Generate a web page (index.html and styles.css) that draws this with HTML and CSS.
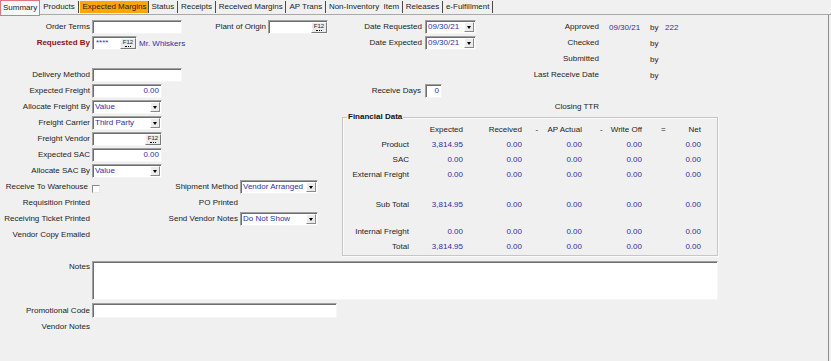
FILE: index.html
```html
<!DOCTYPE html>
<html>
<head>
<meta charset="utf-8">
<link rel="stylesheet" href="styles.css">
</head>
<body>
<div class="tabs">
  <span class="tab tab-active">Summary</span>
  <span class="tab">Products</span>
  <span class="tab tab-orange">Expected Margins</span>
  <span class="tab">Status</span>
  <span class="tab">Receipts</span>
  <span class="tab">Received Margins</span>
  <span class="tab">AP Trans</span>
  <span class="tab">Non-Inventory  Item</span>
  <span class="tab">Releases</span>
  <span class="tab">e-Fulfillment</span>
</div>
<div class="panel">
  <div class="top">
    <div class="left">
      <div class="row">
        <span class="lbl">Order Terms</span>
        <span class="input w90"></span>
        <span class="lbl2 w84">Plant of Origin</span>
        <span class="input lookup w60"><span class="f12">F12</span></span>
      </div>
      <div class="row">
        <span class="lbl req">Requested By</span>
        <span class="input lookup w45"><span class="val">****</span><span class="f12">F12</span></span>
        <span class="val whisk">Mr. Whiskers</span>
      </div>
      <div class="row"></div>
      <div class="row">
        <span class="lbl">Delivery Method</span>
        <span class="input w90"></span>
      </div>
      <div class="row">
        <span class="lbl">Expected Freight</span>
        <span class="input num w70"><span class="val">0.00</span></span>
      </div>
      <div class="row">
        <span class="lbl">Allocate Freight By</span>
        <span class="input combo w70"><span class="val">Value</span><span class="dd"></span></span>
      </div>
      <div class="row">
        <span class="lbl">Freight Carrier</span>
        <span class="input combo w70"><span class="val">Third Party</span><span class="dd"></span></span>
      </div>
      <div class="row">
        <span class="lbl">Freight Vendor</span>
        <span class="input lookup w70"><span class="f12">F12</span></span>
      </div>
      <div class="row">
        <span class="lbl">Expected SAC</span>
        <span class="input num w70"><span class="val">0.00</span></span>
      </div>
      <div class="row">
        <span class="lbl">Allocate SAC By</span>
        <span class="input combo w70"><span class="val">Value</span><span class="dd"></span></span>
      </div>
      <div class="row">
        <span class="lbl lbl-cb">Receive To Warehouse</span>
        <span class="check"></span>
        <span class="lbl2 w138">Shipment Method</span>
        <span class="input combo w78"><span class="val">Vendor Arranged</span><span class="dd"></span></span>
      </div>
      <div class="row">
        <span class="lbl">Requisition Printed</span>
        <span class="lbl2 w146">PO Printed</span>
      </div>
      <div class="row">
        <span class="lbl">Receiving Ticket Printed</span>
        <span class="lbl2 w146">Send Vendor Notes</span>
        <span class="input combo w78"><span class="val">Do Not Show</span><span class="dd"></span></span>
      </div>
      <div class="row">
        <span class="lbl">Vendor Copy Emailed</span>
      </div>
    </div>
    <div class="right">
      <div class="rtop">
        <div class="dates">
          <div class="row">
            <span class="dl">Date Requested</span>
            <span class="input combo w51"><span class="val">09/30/21</span><span class="dd"></span></span>
          </div>
          <div class="row">
            <span class="dl">Date Expected</span>
            <span class="input combo w51"><span class="val">09/30/21</span><span class="dd"></span></span>
          </div>
          <div class="row"></div>
          <div class="row"></div>
          <div class="row">
            <span class="dl dl-days">Receive Days</span>
            <span class="input num w17"><span class="val">0</span></span>
          </div>
        </div>
        <div class="appr">
          <div class="row"><span class="al">Approved</span><span class="av val">09/30/21</span><span class="by">by</span><span class="val">222</span></div>
          <div class="row"><span class="al">Checked</span><span class="av"></span><span class="by">by</span></div>
          <div class="row"><span class="al">Submitted</span><span class="av"></span><span class="by">by</span></div>
          <div class="row"><span class="al">Last Receive Date</span><span class="av"></span><span class="by">by</span></div>
          <div class="row"></div>
          <div class="row"><span class="al">Closing TTR</span></div>
        </div>
      </div>
      <div class="group">
        <div class="gtitle">Financial Data</div>
        <div class="frow">
          <span></span>
          <span>Expected</span>
          <span>Received</span>
          <span class="hc hc1"><span>-</span><span>AP Actual</span></span>
          <span class="hc hc2"><span>-</span><span>Write Off</span></span>
          <span class="hc hc3"><span>=</span><span>Net</span></span>
        </div>
        <div class="frow">
          <span>Product</span><span class="val">3,814.95</span><span class="val">0.00</span><span class="val">0.00</span><span class="val">0.00</span><span class="val">0.00</span>
        </div>
        <div class="frow">
          <span>SAC</span><span class="val">0.00</span><span class="val">0.00</span><span class="val">0.00</span><span class="val">0.00</span><span class="val">0.00</span>
        </div>
        <div class="frow">
          <span>External Freight</span><span class="val">0.00</span><span class="val">0.00</span><span class="val">0.00</span><span class="val">0.00</span><span class="val">0.00</span>
        </div>
        <div class="fsp1"></div>
        <div class="frow">
          <span>Sub Total</span><span class="val">3,814.95</span><span class="val">0.00</span><span class="val">0.00</span><span class="val">0.00</span><span class="val">0.00</span>
        </div>
        <div class="fsp2"></div>
        <div class="frow">
          <span>Internal Freight</span><span class="val">0.00</span><span class="val">0.00</span><span class="val">0.00</span><span class="val">0.00</span><span class="val">0.00</span>
        </div>
        <div class="frow">
          <span>Total</span><span class="val">3,814.95</span><span class="val">0.00</span><span class="val">0.00</span><span class="val">0.00</span><span class="val">0.00</span>
        </div>
      </div>
    </div>
  </div>
  <div class="notes">
    <span class="lbl lbl-top">Notes</span>
    <span class="input ta"></span>
  </div>
  <div class="row promo">
    <span class="lbl">Promotional Code</span>
    <span class="input w245"></span>
  </div>
  <div class="row vnotes">
    <span class="lbl">Vendor Notes</span>
  </div>
</div>
</body>
</html>
```
FILE: styles.css
```css
* { box-sizing: border-box; }
html, body { margin: 0; padding: 0; }
body {
  width: 831px;
  height: 361px;
  overflow: hidden;
  background: #f0f0f0;
  font-family: "Liberation Sans", Arial, sans-serif;
  font-size: 8px;
  color: #1c1c1c;
}

/* tabs */
.tabs {
  display: flex;
  align-items: flex-start;
  height: 15px;
  border-bottom: 1px solid #a9a9a9;
}
.tab {
  height: 12px;
  margin-top: 1px;
  line-height: 12px;
  padding: 0 2.7px 0 3px;
  border-right: 1px solid #4a4a4a;
  white-space: pre;
  flex: none;
}
.tab-active {
  height: 16px;
  margin-top: 0;
  line-height: 13px;
  padding: 0 2px;
  border: 1px solid #e6717f;
  background: #f8f8f8;
  position: relative;
  z-index: 1;
}
.tab-orange {
  margin-left: 1px;
  padding-right: 1px;
  background: #ffa500;
}

/* panel */
.panel {
  width: 829px;
  height: 346px;
  border-right: 1px solid #8e8e8e;
  padding-top: 4px;
}
.top {
  display: flex;
  align-items: flex-start;
}
.left { width: 330px; flex: none; }
.right { flex: none; }

.row {
  display: flex;
  align-items: center;
  height: 16px;
}
.lbl {
  width: 90px;
  margin-right: 2px;
  text-align: right;
  white-space: nowrap;
  flex: none;
  line-height: 10px;
}
.lbl2 {
  text-align: right;
  white-space: nowrap;
  margin-right: 2px;
  flex: none;
  line-height: 10px;
}
.req { color: #8b1414; font-weight: bold; }
.lbl-cb { padding-right: 2px; }
.w84 { width: 84px; }
.w138 { width: 138px; }
.w146 { width: 146px; }

.val { color: #2f2fa3; white-space: nowrap; }
.whisk { margin-left: 2px; }

/* controls */
.input {
  display: flex;
  align-items: center;
  height: 14px;
  background: #fff;
  border: 1px solid;
  border-color: #a0a0a0 #f6f6f6 #f6f6f6 #a0a0a0;
  box-shadow: inset 1px 1px 0 #6e6e6e;
  flex: none;
  line-height: 10px;
  padding-left: 3px;
}
.w17 { width: 17px; }
.w45 { width: 45px; }
.w51 { width: 51px; }
.w60 { width: 60px; }
.w70 { width: 70px; }
.w78 { width: 78px; }
.w90 { width: 90px; }
.w245 { width: 245px; }

.num { justify-content: flex-end; padding-right: 2px; }
.combo { justify-content: space-between; padding-left: 2px; padding-right: 1px; }
.lookup { justify-content: space-between; padding-right: 0; }
.lookup .f12 { margin-left: auto; }

.dd {
  width: 10px;
  height: 10px;
  background: #ececec;
  border: 1px solid;
  border-color: #ffffff #8a8a8a #8a8a8a #ffffff;
  display: flex;
  align-items: center;
  justify-content: center;
  flex: none;
}
.dd::after {
  content: "";
  border-left: 2.5px solid transparent;
  border-right: 2.5px solid transparent;
  border-top: 3px solid #000;
}

.f12 {
  width: 16px;
  height: 11px;
  padding-top: 0;
  background: #ebebeb;
  border: 1px solid;
  border-color: #ffffff #7a7a7a #7a7a7a #ffffff;
  font-size: 6px;
  line-height: 6px;
  text-align: center;
  color: #222;
  flex: none;
  overflow: hidden;
}
.f12::after {
  content: "";
  display: block;
  width: 6px;
  margin: 1px auto 0;
  border-bottom: 1px dotted #000;
}

.check {
  width: 8px;
  height: 8px;
  margin-top: 4px;
  background: #fff;
  border: 1px solid;
  border-color: #8a8a8a #e8e8e8 #e8e8e8 #8a8a8a;
  flex: none;
}

/* right part */
.rtop { display: flex; }
.dates { width: 200px; flex: none; }
.dl {
  width: 92px;
  margin-right: 3px;
  text-align: right;
  white-space: nowrap;
  flex: none;
  line-height: 10px;
}
.dl-days { width: 91px; margin-right: 4px; }

.appr { width: 200px; flex: none; }
.al {
  width: 69px;
  text-align: right;
  white-space: nowrap;
  flex: none;
  line-height: 10px;
}
.av { width: 41px; margin-left: 10px; flex: none; }
.by { width: 15px; flex: none; }

/* financial group */
.group {
  margin: 2px 0 0 12px;
  width: 376px;
  height: 139px;
  border: 1px solid #c6c6c6;
  box-shadow: inset 1px 1px 0 #fbfbfb, 1px 1px 0 #fbfbfb;
}
.gtitle {
  width: max-content;
  height: 10px;
  margin: -6px 0 0 4px;
  padding: 0 1px;
  line-height: 10px;
  background: #f0f0f0;
  font-weight: bold;
  color: #111;
}
.frow {
  display: grid;
  grid-template-columns: 66px 54px 59px 60px 60px 59px;
  height: 15px;
  align-items: center;
  text-align: right;
  line-height: 10px;
  white-space: nowrap;
}
.hc { display: flex; justify-content: space-between; }
.hc1 { padding-left: 13.5px; }
.hc2 { padding-left: 18px; }
.hc3 { padding-left: 19px; }
.fsp1 { height: 15px; }
.fsp2 { height: 12px; }

/* bottom */
.notes {
  display: flex;
  align-items: flex-start;
  margin-top: 5px;
}
.lbl-top { padding-top: 1px; }
.ta { width: 626px; height: 39px; }
.promo { margin-top: 3px; height: 15px; }
.promo .input { height: 15px; }
.vnotes { margin-top: 1px; }
```
